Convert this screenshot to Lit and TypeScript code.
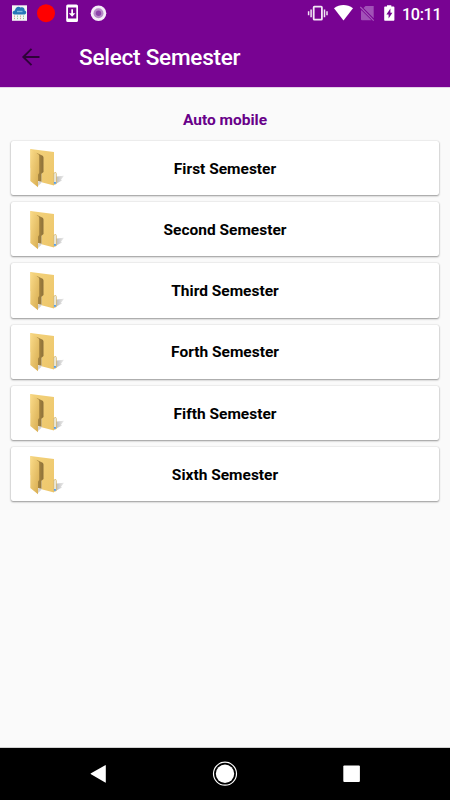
import { LitElement, html, css } from "lit";
import { customElement, property } from "lit/decorators.js";

@customElement("status-bar")
class StatusBar extends LitElement {
  static styles = css`
    :host { display: flex; height: 27px; color: #fff; }
    .icons { display: block; width: 398px; height: 27px; flex: none; }
    .time { font: 500 16.2px/27px Roboto, sans-serif; padding: 1px 0 0 4px; letter-spacing: -0.35px; white-space: nowrap; }
  `;
  render() {
    return html`
      <svg class="icons" viewBox="0 0 398 27">
        <rect x="12" y="5.3" width="15" height="15.5" fill="#f3f5f4" />
        <path d="M14.3 14.5c-2.4-.3-2.2-3.6.6-4 .5-3.6 3.8-4.8 5.6-3 2.7-1 4.4.8 4.1 3.1 2.3.7 2 3.6 0 3.9z" fill="#2675b8" />
        <path d="M17 11.5h5.5" stroke="#7eb5df" stroke-width="1.4" />
        <path d="M14.5 15.5v4M20.5 15.5v4" stroke="#d79a91" stroke-dasharray="1.3 1" />
        <path d="M17.5 15.5v4M23.5 15.5v4" stroke="#8fc09c" stroke-dasharray="1.3 1" />
        <circle cx="46" cy="13.2" r="9" fill="#f00" />
        <path fill="#fff" fill-rule="evenodd" d="M67.8 4.4h8.6a1.6 1.6 0 0 1 1.6 1.6v14.4a1.6 1.6 0 0 1-1.6 1.6h-8.6a1.6 1.6 0 0 1-1.6-1.6V6a1.6 1.6 0 0 1 1.6-1.6zM68 7.6v10.9h8.3V7.6z" />
        <path fill="#fff" d="M71.3 9.2h1.7v4h2.4l-3.3 3.6-3.3-3.6h2.5z" />
        <circle cx="98.5" cy="13.2" r="7.8" fill="#f4edf7" />
        <circle cx="98.5" cy="13.2" r="5" fill="#b78bc8" />
        <circle cx="98.5" cy="13.2" r="2.7" fill="#8d44aa" />
        <g fill="none" stroke="#f2e6f5">
          <rect x="313.7" y="6.7" width="8.2" height="13" rx=".7" stroke-width="1.8" />
          <path d="M311.1 9.4v7.8M308.6 11.3v4M324.5 9.4v7.8M327 11.3v4" stroke-width="1.5" />
        </g>
        <path d="M334 8.2C339.8 3.9 347.2 3.9 353 8.2L343.5 20.6z" fill="#fff" />
        <path d="M365.5 6h8.2v12.2L363.5 8zM361.5 10.3l10 10h-9.5a1 1 0 0 1-1-1v-8.5z" fill="#a152b7" />
        <path d="M360.3 7l13.4 13.6" stroke="#a65cba" stroke-width="1.2" />
        <path fill="#fff" fill-rule="evenodd" d="M387 5.2h4.3v1.4h2.1c.6 0 1 .4 1 1v12.2c0 .6-.4 1-1 1h-8.2c-.6 0-1-.4-1-1V7.6c0-.6.4-1 1-1h1.8zM390.4 8.6l-4 5.8h2.2v4.2l3.8-5.8h-2z" />
      </svg>
      <span class="time">10:11</span>
    `;
  }
}

@customElement("semester-card")
class SemesterCard extends LitElement {
  @property() label = "";
  static styles = css`
    :host {
      display: grid; grid-template-columns: 60px 1fr 60px; align-items: center;
      height: 54.4px; background: #fff; border-radius: 2px;
      box-shadow: 0 1px 2px rgba(0, 0, 0, 0.38), 0 0 1.5px rgba(0, 0, 0, 0.2);
    }
    .folder { display: block; width: 37px; height: 41px; margin-left: 17px; }
    .label { text-align: center; color: #000; font: 700 15.5px/20px Roboto, sans-serif; padding-top: 1.6px; }
  `;
  render() {
    return html`
      <svg class="folder" viewBox="28 147 37 41">
        <defs>
          <linearGradient id="front" x1="0" y1="0" x2="1" y2="1">
            <stop offset="0" stop-color="#fbdc8a" /><stop offset="1" stop-color="#d6ab4f" />
          </linearGradient>
          <linearGradient id="back" x1="0" y1="0" x2="1" y2="1">
            <stop offset="0" stop-color="#f3d27b" /><stop offset="1" stop-color="#edc66b" />
          </linearGradient>
          <linearGradient id="shade" x1="0" y1="0" x2="1" y2="0">
            <stop offset="0" stop-color="#999" /><stop offset="1" stop-color="#e6e6e6" />
          </linearGradient>
          <linearGradient id="fold" x1="0" y1="0" x2="1" y2="0">
            <stop offset="0" stop-color="#b08d42" /><stop offset="1" stop-color="#8d713a" />
          </linearGradient>
        </defs>
        <path d="M54.5 176.7l9.5-.9-3 4 1 .8-7.5 4z" fill="url(#shade)" opacity=".75" />
        <path d="M30.3 149L54 152v33.6l-12.5-3.4V173l-11-5z" fill="url(#back)" />
        <path d="M36.5 152.8l5.6 2.6c.8.4 1.4 1.2 1.4 2.2v14.5l-2 1.6v8.2l-4-1z" fill="url(#fold)" />
        <path d="M37.8 186.2v-4.2l3.7-.4v1.2z" fill="#d6d6d6" />
        <path d="M30.3 149l7.4 4.8c.9.6 1.5 1.4 1.5 2.5v16.5l-1.2 2v12.5L30.3 181z" fill="url(#front)" />
        <path d="M53.8 173.2l1.9-.8.6 1.3v10l-2.5.6z" fill="#edf1ef" stroke="#d3b163" stroke-width=".8" />
        <path d="M54 182h1.9v1.8H54z" fill="#4c9df3" />
      </svg>
      <span class="label">${this.label}</span>
    `;
  }
}

@customElement("app-root")
class AppRoot extends LitElement {
  semesters = ["First", "Second", "Third", "Forth", "Fifth", "Sixth"];
  static styles = css`
    :host { display: flex; flex-direction: column; height: 800px; width: 450px; background: #fafafa; overflow: hidden; }
    .top { flex: none; height: 87px; background: #780392; box-shadow: 0 0 1px #780392; }
    .appbar { display: flex; align-items: center; height: 60px; color: #fff; }
    .back { width: 20px; height: 20px; margin: 0 38px 0 21px; flex: none; }
    .title { font: 500 22.6px/30px Roboto, sans-serif; letter-spacing: -0.27px; margin: 0; padding-top: 2px; white-space: nowrap; }
    .content { flex: 1; padding: 23px 11px 0; }
    .branch { margin: 0 0 10.8px; text-align: center; color: #680089; font: 700 15.5px/20px Roboto, sans-serif; }
    .list { display: flex; flex-direction: column; gap: 6.85px; }
    .nav { flex: none; height: 52px; background: #000; box-shadow: 0 0 1px #000; }
    .nav svg { display: block; }
  `;
  render() {
    return html`
      <header class="top">
        <status-bar></status-bar>
        <div class="appbar">
          <svg class="back" viewBox="0 0 20 20" fill="none" stroke="#2e0338" stroke-width="1.9">
            <path d="M18.5 10H2.5M10.5 1.8L2.3 10l8.2 8.2" />
          </svg>
          <h1 class="title">Select Semester</h1>
        </div>
      </header>
      <main class="content">
        <h2 class="branch">Auto mobile</h2>
        <div class="list">
          ${this.semesters.map((s) => html`<semester-card .label=${s + " Semester"}></semester-card>`)}
        </div>
      </main>
      <nav class="nav">
        <svg width="450" height="52" viewBox="0 0 450 52" fill="#fff">
          <path d="M91 25.3L105.2 17.2q.6-.3.6.4v16.6q0 .7-.6.4L91 26.3q-1-.5 0-1z" />
          <circle cx="225" cy="25.7" r="9.2" />
          <circle cx="225" cy="25.7" r="11.5" fill="none" stroke="#fff" stroke-width="1.2" />
          <rect x="343.3" y="17.5" width="16.6" height="16.6" rx="1" />
        </svg>
      </nav>
    `;
  }
}
